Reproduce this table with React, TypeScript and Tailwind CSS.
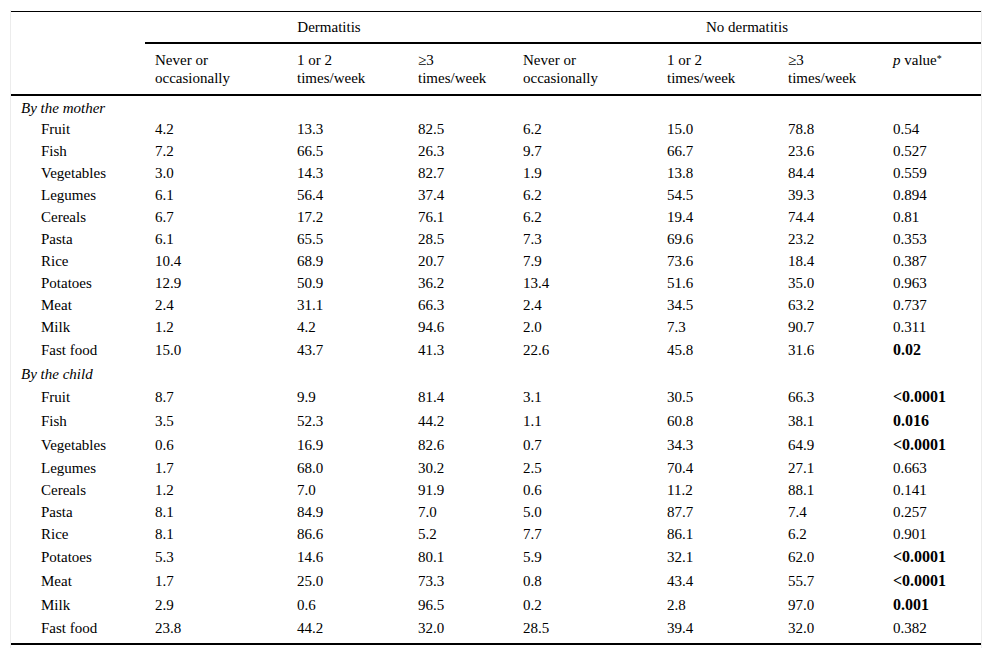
type Row = { label: string; v: string[]; bold?: boolean };

const mother: Row[] = [
  { label: 'Fruit', v: ['4.2', '13.3', '82.5', '6.2', '15.0', '78.8', '0.54'] },
  { label: 'Fish', v: ['7.2', '66.5', '26.3', '9.7', '66.7', '23.6', '0.527'] },
  { label: 'Vegetables', v: ['3.0', '14.3', '82.7', '1.9', '13.8', '84.4', '0.559'] },
  { label: 'Legumes', v: ['6.1', '56.4', '37.4', '6.2', '54.5', '39.3', '0.894'] },
  { label: 'Cereals', v: ['6.7', '17.2', '76.1', '6.2', '19.4', '74.4', '0.81'] },
  { label: 'Pasta', v: ['6.1', '65.5', '28.5', '7.3', '69.6', '23.2', '0.353'] },
  { label: 'Rice', v: ['10.4', '68.9', '20.7', '7.9', '73.6', '18.4', '0.387'] },
  { label: 'Potatoes', v: ['12.9', '50.9', '36.2', '13.4', '51.6', '35.0', '0.963'] },
  { label: 'Meat', v: ['2.4', '31.1', '66.3', '2.4', '34.5', '63.2', '0.737'] },
  { label: 'Milk', v: ['1.2', '4.2', '94.6', '2.0', '7.3', '90.7', '0.311'] },
  { label: 'Fast food', v: ['15.0', '43.7', '41.3', '22.6', '45.8', '31.6', '0.02'], bold: true },
];

const child: Row[] = [
  { label: 'Fruit', v: ['8.7', '9.9', '81.4', '3.1', '30.5', '66.3', '<0.0001'], bold: true },
  { label: 'Fish', v: ['3.5', '52.3', '44.2', '1.1', '60.8', '38.1', '0.016'], bold: true },
  { label: 'Vegetables', v: ['0.6', '16.9', '82.6', '0.7', '34.3', '64.9', '<0.0001'], bold: true },
  { label: 'Legumes', v: ['1.7', '68.0', '30.2', '2.5', '70.4', '27.1', '0.663'] },
  { label: 'Cereals', v: ['1.2', '7.0', '91.9', '0.6', '11.2', '88.1', '0.141'] },
  { label: 'Pasta', v: ['8.1', '84.9', '7.0', '5.0', '87.7', '7.4', '0.257'] },
  { label: 'Rice', v: ['8.1', '86.6', '5.2', '7.7', '86.1', '6.2', '0.901'] },
  { label: 'Potatoes', v: ['5.3', '14.6', '80.1', '5.9', '32.1', '62.0', '<0.0001'], bold: true },
  { label: 'Meat', v: ['1.7', '25.0', '73.3', '0.8', '43.4', '55.7', '<0.0001'], bold: true },
  { label: 'Milk', v: ['2.9', '0.6', '96.5', '0.2', '2.8', '97.0', '0.001'], bold: true },
  { label: 'Fast food', v: ['23.8', '44.2', '32.0', '28.5', '39.4', '32.0', '0.382'] },
];

function Section({ title, rows, first }: { title: string; rows: Row[]; first?: boolean }) {
  return (
    <>
      <tr className={first ? 'h-[22px]' : 'h-[23px]'}>
        <td colSpan={8} className={`pl-[10px] italic align-middle ${first ? 'pt-[3px]' : 'pt-[4px]'}`}>
          {title}
        </td>
      </tr>
      {rows.map((r) => (
        <tr key={title + r.label} className={r.bold ? 'h-[24px]' : 'h-[22px]'}>
          <td className="pl-[30px] pt-[3px] align-middle">{r.label}</td>
          {r.v.map((x, i) => (
            <td
              key={i}
              className={`pl-[10px] pt-[3px] align-middle ${i === 6 && r.bold ? 'font-bold text-[16px]' : ''}`}
            >
              {x}
            </td>
          ))}
        </tr>
      ))}
    </>
  );
}

export default function App() {
  const sub = [
    ['Never or', 'occasionally'],
    ['1 or 2', 'times/week'],
    ['≥3', 'times/week'],
  ];
  return (
    <div className="bg-white min-h-[657px] pt-[10px]">
      <div
        className="ml-[10px] w-[972px] border-x border-[#ececec] pt-px pb-[3px] text-black text-[15px] leading-[18px]"
        style={{ fontFamily: '"Liberation Serif", "Times New Roman", serif' }}
      >
        <table className="w-[970px] table-fixed border-collapse">
          <colgroup>
            <col className="w-[134px]" />
            <col className="w-[142px]" />
            <col className="w-[121px]" />
            <col className="w-[105px]" />
            <col className="w-[144px]" />
            <col className="w-[121px]" />
            <col className="w-[105px]" />
            <col className="w-[98px]" />
          </colgroup>
          <thead>
            <tr className="h-[31px] border-t border-black">
              <th rowSpan={2} className="border-b-2 border-black"></th>
              <th colSpan={3} className="font-normal text-center border-b-2 border-black align-middle">
                Dermatitis
              </th>
              <th colSpan={4} className="font-normal text-center border-b-2 border-black align-middle">
                No dermatitis
              </th>
            </tr>
            <tr className="h-[52px] border-b-2 border-black">
              {[...sub, ...sub].map((s, i) => (
                <th key={i} className="font-normal text-left pl-[10px] align-top pt-[7px]">
                  {s[0]}
                  <br />
                  {s[1]}
                </th>
              ))}
              <th className="font-normal text-left pl-[10px] align-top pt-[7px]">
                <i>p</i> value<sup className="text-[10px] relative -top-[3px]">*</sup>
              </th>
            </tr>
          </thead>
          <tbody className="border-b-2 border-black">
            <Section title="By the mother" rows={mother} first />
            <Section title="By the child" rows={child} />
            <tr className="h-[6px]">
              <td colSpan={8}></td>
            </tr>
          </tbody>
        </table>
      </div>
    </div>
  );
}
